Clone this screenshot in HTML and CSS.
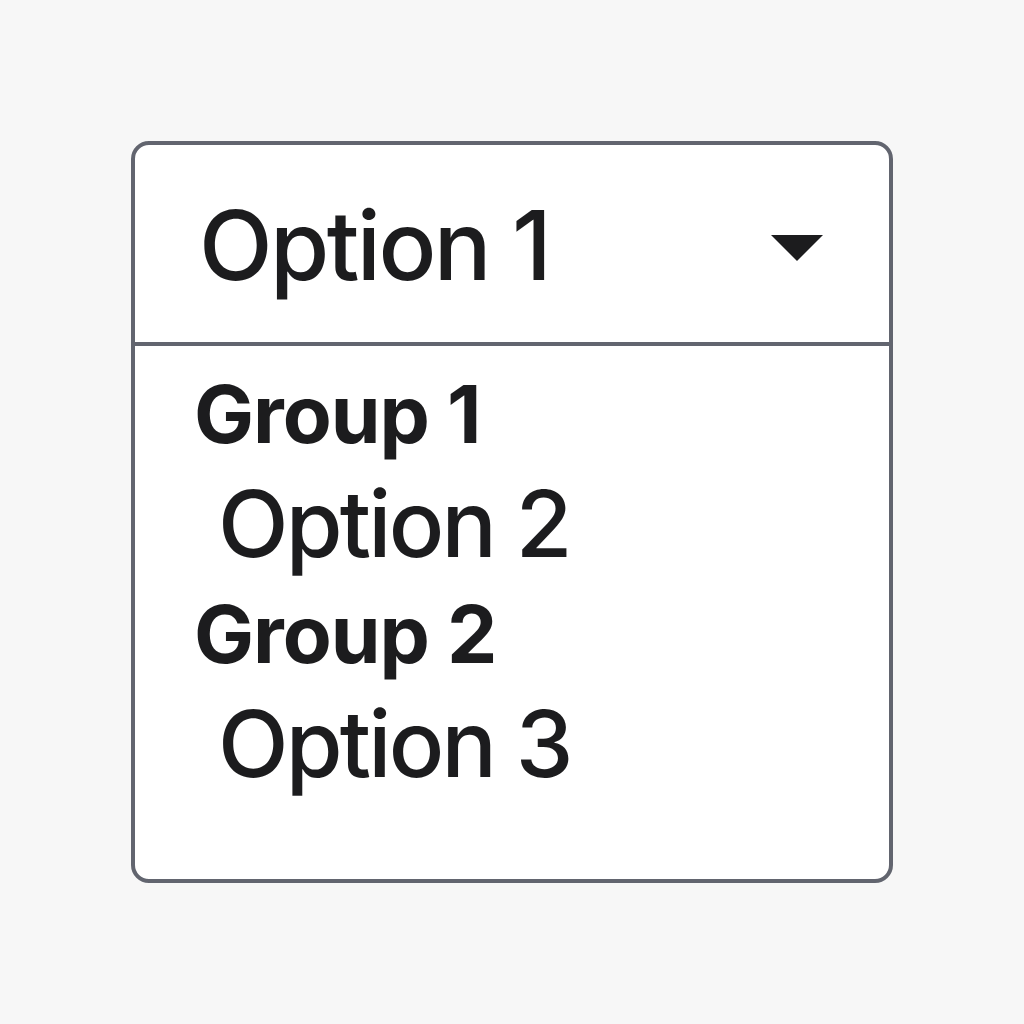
FILE: index.html
```html
<!DOCTYPE html>
<html lang="en">
<head>
<meta charset="utf-8">
<title>Select</title>
<link rel="stylesheet" href="styles.css">
</head>
<body>
<div class="select">
  <div class="select-head">
    <span class="select-value">Option 1</span>
    <svg class="caret" width="52" height="26" viewBox="0 0 52 26"><path d="M0 0 H52 L26 26 Z" fill="#1c1c1e"/></svg>
  </div>
  <div class="select-list">
    <div class="group-label">Group 1</div>
    <div class="option">Option 2</div>
    <div class="group-label">Group 2</div>
    <div class="option">Option 3</div>
  </div>
</div>
</body>
</html>
```
FILE: styles.css
```css
html, body {
  margin: 0;
  padding: 0;
  height: 100%;
}
body {
  background: #f7f7f7;
  display: flex;
  align-items: center;
  justify-content: center;
  font-family: Inter, "Noto Sans", sans-serif;
  color: #1c1c1e;
}
.select {
  width: 762px;
  height: 742px;
  box-sizing: border-box;
  border: 4px solid #62656f;
  border-radius: 18px;
  background: #ffffff;
  display: flex;
  flex-direction: column;
  overflow: hidden;
}
.select-head {
  height: 201px;
  flex: none;
  box-sizing: border-box;
  border-bottom: 4px solid #62656f;
  display: flex;
  align-items: center;
  justify-content: space-between;
  padding: 0 66px 0 64px;
}
.select-value {
  font-size: 96px;
  font-weight: 450;
  line-height: 96px;
  letter-spacing: -2.6px;
  margin-top: 2px;
}
.caret {
  display: block;
  margin-top: 9px;
}
.select-list {
  padding: 16px 0 0 59px;
}
.group-label {
  font-size: 80px;
  font-weight: 700;
  line-height: 104px;
  letter-spacing: -1px;
}
.option {
  font-size: 92px;
  font-weight: 450;
  line-height: 116px;
  padding-left: 24px;
  letter-spacing: -2.8px;
}
```
